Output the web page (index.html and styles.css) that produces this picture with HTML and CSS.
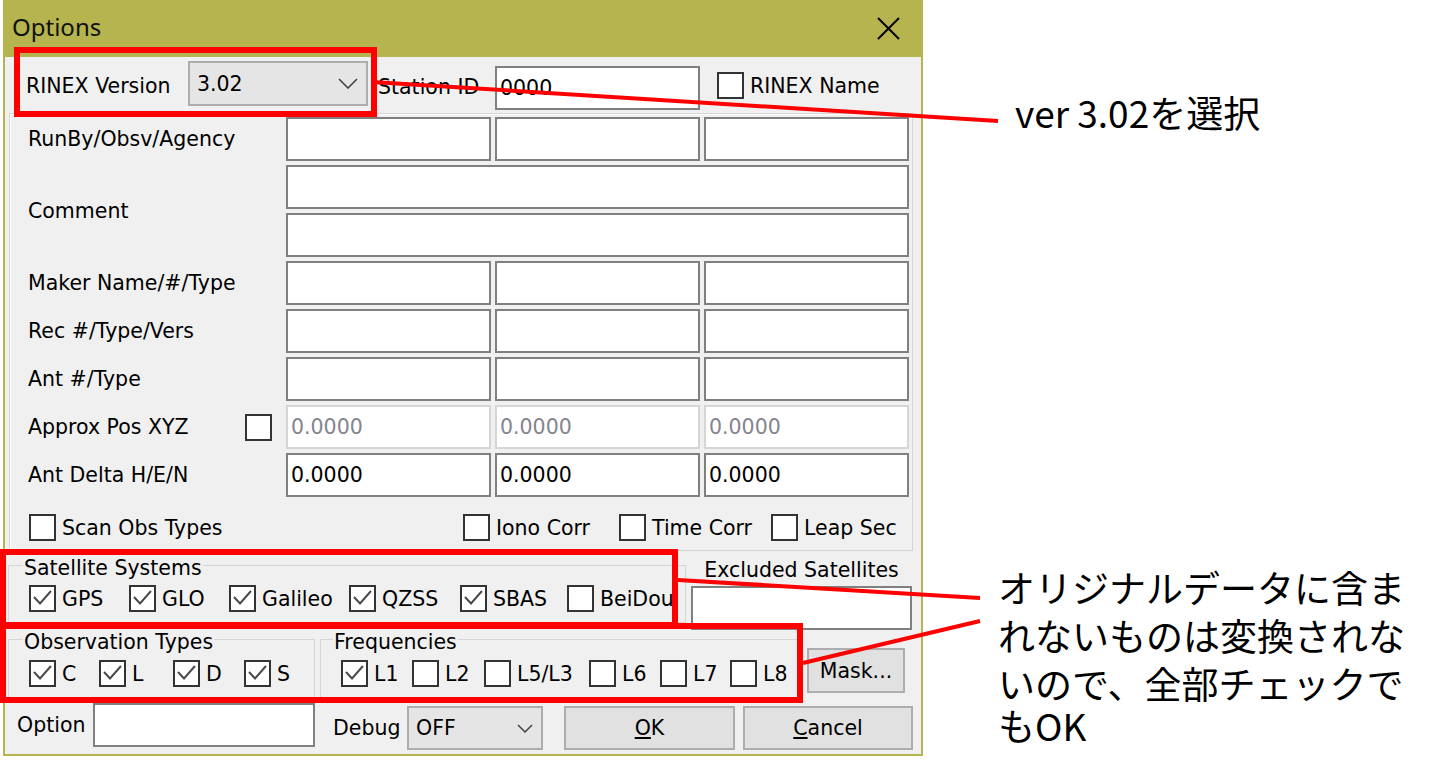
FILE: index.html
```html
<!DOCTYPE html>
<html lang="ja">
<head>
<meta charset="utf-8">
<title>Options</title>
<link rel="stylesheet" href="styles.css">
</head>
<body>
<div class="page">
  <div class="dialog">
    <div class="titlebar">
      <span class="title">Options</span>
      <svg class="close" width="23" height="23" viewBox="0 0 23 23"><path d="M1 1L22 22M22 1L1 22" stroke="#000" stroke-width="2" fill="none"/></svg>
    </div>
    <div class="content">
      <div class="top-row">
        <span class="lbl-version">RINEX Version</span>
        <div class="combo combo-version"><span>3.02</span><svg class="chev" width="20" height="11" viewBox="0 0 20 11"><path d="M1 1L10 10L19 1" stroke="#444" stroke-width="1.6" fill="none"/></svg></div>
        <span class="lbl-station">Station ID</span>
        <div class="input input-station">0000</div>
        <label class="cb cb-rinexname"><span class="box"></span>RINEX Name</label>
      </div>

      <div class="panel">
        <div class="fields">
          <span class="lbl">RunBy/Obsv/Agency</span>
          <div class="input"></div><div class="input"></div><div class="input"></div>

          <span class="lbl lbl-comment">Comment</span>
          <div class="input wide"></div>
          <div class="input wide"></div>

          <span class="lbl">Maker Name/#/Type</span>
          <div class="input"></div><div class="input"></div><div class="input"></div>

          <span class="lbl">Rec #/Type/Vers</span>
          <div class="input"></div><div class="input"></div><div class="input"></div>

          <span class="lbl">Ant #/Type</span>
          <div class="input"></div><div class="input"></div><div class="input"></div>

          <span class="lbl lbl-approx">Approx Pos XYZ<span class="box"></span></span>
          <div class="input dis">0.0000</div><div class="input dis">0.0000</div><div class="input dis">0.0000</div>

          <span class="lbl">Ant Delta H/E/N</span>
          <div class="input">0.0000</div><div class="input">0.0000</div><div class="input">0.0000</div>
        </div>
        <div class="opts">
          <label class="cb w-scan"><span class="box"></span>Scan Obs Types</label>
          <label class="cb w-iono"><span class="box"></span>Iono Corr</label>
          <label class="cb w-time"><span class="box"></span>Time Corr</label>
          <label class="cb"><span class="box"></span>Leap Sec</label>
        </div>
      </div>

      <div class="groups">
        <fieldset class="grp grp-sat">
          <legend>Satellite Systems</legend>
          <div class="cb-row">
            <label class="cb w-gps"><span class="box"><svg viewBox="0 0 23 23"><path d="M3 10L9 16.5L20 4"/></svg></span>GPS</label>
            <label class="cb w-glo"><span class="box"><svg viewBox="0 0 23 23"><path d="M3 10L9 16.5L20 4"/></svg></span>GLO</label>
            <label class="cb w-gal"><span class="box"><svg viewBox="0 0 23 23"><path d="M3 10L9 16.5L20 4"/></svg></span>Galileo</label>
            <label class="cb w-qzss"><span class="box"><svg viewBox="0 0 23 23"><path d="M3 10L9 16.5L20 4"/></svg></span>QZSS</label>
            <label class="cb w-sbas"><span class="box"><svg viewBox="0 0 23 23"><path d="M3 10L9 16.5L20 4"/></svg></span>SBAS</label>
            <label class="cb"><span class="box"></span>BeiDou</label>
          </div>
        </fieldset>

        <div class="excl">
          <span class="excl-lbl">Excluded Satellites</span>
          <div class="input excl-input"></div>
        </div>

        <fieldset class="grp grp-obs">
          <legend>Observation Types</legend>
          <div class="cb-row">
            <label class="cb w-c"><span class="box"><svg viewBox="0 0 23 23"><path d="M3 10L9 16.5L20 4"/></svg></span>C</label>
            <label class="cb w-l"><span class="box"><svg viewBox="0 0 23 23"><path d="M3 10L9 16.5L20 4"/></svg></span>L</label>
            <label class="cb w-d"><span class="box"><svg viewBox="0 0 23 23"><path d="M3 10L9 16.5L20 4"/></svg></span>D</label>
            <label class="cb"><span class="box"><svg viewBox="0 0 23 23"><path d="M3 10L9 16.5L20 4"/></svg></span>S</label>
          </div>
        </fieldset>

        <fieldset class="grp grp-freq">
          <legend>Frequencies</legend>
          <div class="cb-row">
            <label class="cb w-l1"><span class="box"><svg viewBox="0 0 23 23"><path d="M3 10L9 16.5L20 4"/></svg></span>L1</label>
            <label class="cb w-l2"><span class="box"></span>L2</label>
            <label class="cb w-l5"><span class="box"></span>L5/L3</label>
            <label class="cb w-l6"><span class="box"></span>L6</label>
            <label class="cb w-l7"><span class="box"></span>L7</label>
            <label class="cb"><span class="box"></span>L8</label>
          </div>
        </fieldset>

        <div class="btn btn-mask">Mask...</div>
      </div>

      <div class="bottom-row">
        <span class="lbl-option">Option</span>
        <div class="input input-option"></div>
        <span class="lbl-debug">Debug</span>
        <div class="combo combo-debug"><span>OFF</span><svg class="chev" width="16" height="9" viewBox="0 0 16 9"><path d="M1 1L8 8L15 1" stroke="#444" stroke-width="1.5" fill="none"/></svg></div>
        <div class="btn btn-ok"><span><u>O</u>K</span></div>
        <div class="btn btn-cancel"><span><u>C</u>ancel</span></div>
      </div>
    </div>
  </div>

  <div class="mark mark-version"></div>
  <div class="mark mark-sat"></div>
  <div class="mark mark-obs"></div>

  <svg class="leaders" width="1431" height="772" viewBox="0 0 1431 772">
    <path d="M372 82L998 121" stroke="#ff0000" stroke-width="4" fill="none"/>
    <path d="M678 580L980 598" stroke="#ff0000" stroke-width="4" fill="none"/>
    <path d="M803 663L980 621" stroke="#ff0000" stroke-width="4" fill="none"/>
  </svg>

  <p class="note note-version">ver 3.02を選択</p>
  <p class="note note-all"><span class="nl">オリジナルデータに含ま</span><span class="nl">れないものは変換されな</span><span class="nl">いので、全部チェックで</span><span class="nl nl-last">もOK</span></p>
</div>
</body>
</html>
```

FILE: styles.css
```css
* { box-sizing: border-box; }
html, body { margin: 0; padding: 0; background: #fff; }
body {
  font-family: "DejaVu Sans", Verdana, sans-serif;
  font-size: 20.5px;
  color: #000;
}
.page { position: relative; width: 1431px; height: 772px; overflow: hidden; }

/* dialog */
.dialog {
  margin-left: 3px;
  width: 920px;
  height: 756px;
  background: #f0f0f0;
  border: 2px solid #b5b44f;
  border-top: 0;
  display: flex;
  flex-direction: column;
}
.titlebar {
  height: 57px;
  flex: none;
  background: #b5b44f;
  display: flex;
  align-items: flex-start;
  justify-content: space-between;
  padding: 10px 21px 0 7px;
}
.title {
  font-family: "Noto Sans", "Open Sans", sans-serif;
  font-size: 24px;
  color: #111;
  line-height: normal;
}
.close { margin-top: 7px; }

.content { flex: 1; display: flex; flex-direction: column; }

/* top row */
.top-row {
  height: 53px;
  flex: none;
  padding-top: 4px;
  display: flex;
  align-items: flex-start;
}
.lbl-version { margin-left: 21px; width: 162px; line-height: 50px; }
.lbl-station { margin-left: 10px; width: 117px; line-height: 53px; }
.combo {
  display: flex;
  align-items: center;
  justify-content: space-between;
  background: #e5e5e5;
  border: 2px solid #adadad;
  padding: 0 8px 0 7px;
}
.combo-version { width: 180px; height: 45px; }
.input-station { margin-top: 5px; width: 205px; }
.cb-rinexname { margin-left: 17px; margin-top: 11px; }

/* inputs */
.input {
  height: 44px;
  background: #fff;
  border: 2px solid #808080;
  padding: 0 3px;
  line-height: 40px;
  white-space: nowrap;
}
.input.dis { border-color: #d6d6d6; color: #85858f; }

/* checkbox */
.cb { display: inline-flex; align-items: center; gap: 6px; white-space: nowrap; }
.box {
  flex: none;
  width: 27px;
  height: 27px;
  border: 2px solid #333;
  background: #fff;
  display: inline-flex;
}
.box svg { width: 23px; height: 23px; }
.box svg path { fill: none; stroke: #4a4a4a; stroke-width: 2; }

/* main panel */
.panel {
  flex: none;
  margin: 3px 0 0 4px;
  width: 904px;
  height: 438px;
  border: 1px solid #d5d5d5;
  box-shadow: inset 1px 1px 0 #fff;
  padding: 3px 3px 0 18px;
}
.fields {
  display: grid;
  grid-template-columns: 254px 205px 205px 205px;
  grid-auto-rows: 44px;
  gap: 4px;
}
.fields .lbl { display: flex; align-items: center; }
.lbl-comment { grid-row: span 2; }
.input.wide { grid-column: 2 / 5; }
.lbl-approx { justify-content: space-between; padding-right: 10px; }

.opts { display: flex; margin-top: 17px; padding-left: 1px; height: 27px; }
.w-scan { width: 434px; }
.w-iono { width: 156px; }
.w-time { width: 152px; }

/* group boxes */
.groups {
  flex: none;
  display: grid;
  grid-template-columns: 307px 366px 109px 107px;
  grid-template-rows: 74px 78px;
  column-gap: 5px;
  margin-left: 3px;
}
.grp {
  margin: 0;
  min-width: 0;
  border: 1px solid #d5d5d5;
  padding: 0 0 0 20px;
}
.grp legend { padding: 5px 1px 0; margin-left: -6px; line-height: normal; }
.grp-sat { grid-column: 1 / 3; grid-row: 1; height: 72px; }
.grp-obs { grid-column: 1; grid-row: 2; height: 75px; }
.grp-freq { grid-column: 2 / 4; grid-row: 2; height: 75px; }
.grp-freq legend { margin-left: -8px; }
.grp-sat .cb-row { margin-top: 5px; }
.grp-obs .cb-row, .grp-freq .cb-row { margin-top: 6px; }
.cb-row { display: flex; height: 27px; }
.w-gps { width: 100px; }
.w-glo { width: 100px; }
.w-gal { width: 120px; }
.w-qzss { width: 111px; }
.w-sbas { width: 107px; }
.w-c { width: 70px; }
.w-l { width: 74px; }
.w-d { width: 71px; }
.w-l1 { width: 71px; }
.w-l2 { width: 72px; }
.w-l5 { width: 105px; }
.w-l6 { width: 71px; }
.w-l7 { width: 70px; }

.excl {
  grid-column: 3 / 5;
  grid-row: 1;
  height: 79px;
  display: flex;
  flex-direction: column;
  align-items: center;
}
.excl-lbl { margin-top: 7px; line-height: normal; }
.excl-input { margin-top: 4px; width: 221px; }

.btn {
  display: flex;
  align-items: center;
  justify-content: center;
  background: #e1e1e1;
  border: 2px solid #adadad;
  height: 44px;
}
.btn-mask { grid-column: 4; grid-row: 2; margin: 23px 0 0 2px; width: 98px; height: 45px; }

/* bottom row */
.bottom-row {
  flex: none;
  height: 50px;
  display: flex;
  align-items: flex-start;
  padding-left: 12px;
}
.lbl-option { width: 76px; line-height: 44px; }
.input-option { width: 222px; }
.lbl-debug { margin: 3px 0 0 18px; width: 74px; line-height: 44px; }
.combo-debug { margin-top: 3px; width: 136px; height: 44px; }
.btn-ok { margin: 3px 0 0 21px; width: 171px; }
.btn-cancel { margin: 3px 0 0 8px; width: 170px; }

/* annotations */
.mark { position: absolute; border: 6px solid #ff0000; }
.mark-version { left: 14px; top: 47px; width: 363px; height: 70px; }
.mark-sat { left: 0; top: 549px; width: 678px; height: 79px; }
.mark-obs { left: 0; top: 623px; width: 803px; height: 80px; }
.leaders { position: absolute; left: 0; top: 0; pointer-events: none; }

.note {
  position: absolute;
  margin: 0;
  font-family: "Noto Sans CJK JP", "Noto Sans", sans-serif;
  font-size: 37px;
  line-height: 48px;
  color: #000;
  white-space: nowrap;
}
.note-version { left: 1015px; top: 88px; }
.note-all { left: 998px; top: 563px; }
.nl { display: block; }
.nl-last { margin-top: -6px; }
```
